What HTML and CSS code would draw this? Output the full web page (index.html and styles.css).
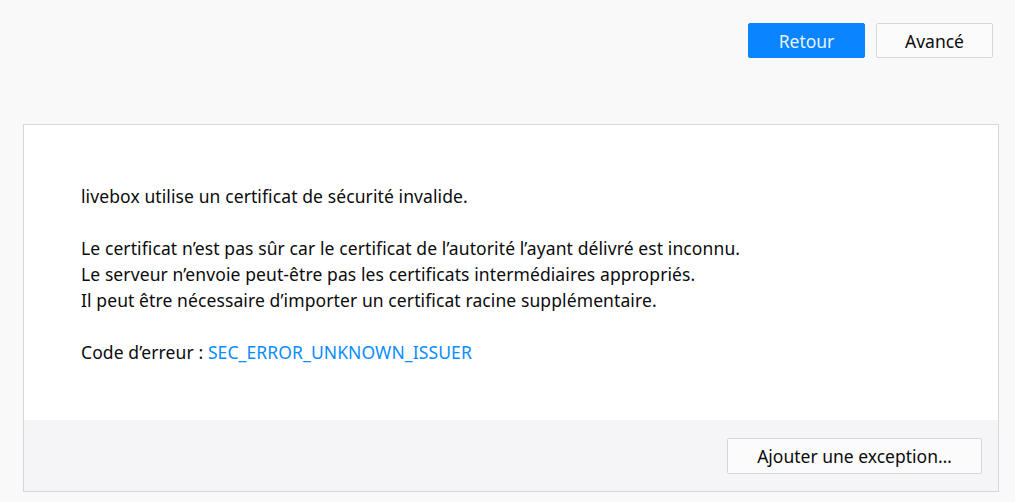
FILE: index.html
```html
<!DOCTYPE html>
<html lang="fr">
<head>
<meta charset="utf-8">
<link rel="stylesheet" href="styles.css">
</head>
<body>
<div class="top">
  <button class="btn primary">Retour</button>
  <button class="btn">Avancé</button>
</div>
<div class="card">
  <div class="card-body">
    <p>livebox utilise un certificat de sécurité invalide.</p>
    <p>Le certificat n’est pas sûr car le certificat de l’autorité l’ayant délivré est inconnu.<br>Le serveur n’envoie peut-être pas les certificats intermédiaires appropriés.<br>Il peut être nécessaire d’importer un certificat racine supplémentaire.</p>
    <p>Code d’erreur : <a class="code">SEC_ERROR_UNKNOWN_ISSUER</a></p>
  </div>
  <div class="card-foot">
    <button class="btn wide">Ajouter une exception…</button>
  </div>
</div>
</body>
</html>
```
FILE: styles.css
```css
html, body { margin: 0; padding: 0; }
body {
  background: #f9f9fa;
  font-family: "Noto Sans", "Open Sans", sans-serif;
  font-size: 17.5px;
  color: #0c0c0d;
}
.top {
  display: flex;
  justify-content: flex-end;
  gap: 11px;
  padding: 23px 22px 0 0;
}
.btn {
  font-family: inherit;
  font-size: 17.5px;
  color: #0c0c0d;
  background: #fbfbfb;
  border: 1px solid #d7d7db;
  border-radius: 2px;
  width: 117px;
  height: 35px;
  padding: 0;
}
.btn.primary {
  background: #0a84ff;
  border-color: #0a84ff;
  color: #e6f2ff;
}
.card {
  margin: 66px 16px 0 23px;
  border: 1px solid #d7d7db;
  background: #fff;
}
.card-body {
  padding: 58px 56px 55px 57px;
  letter-spacing: 0.1px;
}
.card-body p {
  margin: 0 0 26px 0;
  line-height: 26px;
}
.card-body p:last-child { margin-bottom: 0; }
.code { color: #0a8dff; text-decoration: none; }
.card-foot {
  background: #f5f5f7;
  height: 71px;
  display: flex;
  justify-content: flex-end;
  align-items: center;
  padding-right: 16px;
}
.btn.wide { width: 255px; height: 36px; }
```
